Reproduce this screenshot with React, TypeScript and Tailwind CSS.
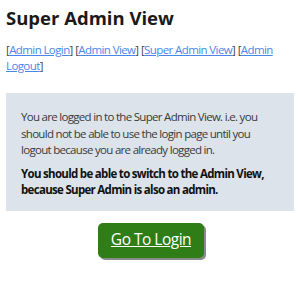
export default function App() {
  return (
    <div className="w-[300px] h-[300px] bg-white px-[6px] pt-[5px] font-['Open_Sans',sans-serif] text-[#333]">
      <h1 className="text-[18.5px] leading-[26px] font-bold text-[#1a1a1a]">Super Admin View</h1>
      <p className="mt-[11px] text-[11.5px] leading-[16px] tracking-[-0.6px] text-[#444]">
        [<a href="#" className="text-[#4a86e8] underline">Admin Login</a>]{" "}
        [<a href="#" className="text-[#4a86e8] underline">Admin View</a>]{" "}
        [<a href="#" className="text-[#4a86e8] underline">Super Admin View</a>]{" "}
        [<a href="#" className="text-[#4a86e8] underline">Admin Logout</a>]
      </p>
      <div className="mt-[19px] bg-[#dce3ea] px-[15px] pt-[16px] pb-[12px] text-[11.5px] leading-[16.5px] tracking-[-0.7px]">
        <p className="text-[#3a3a3a]">
          You are logged in to the Super Admin View. i.e. you should not be able to use the login page until you logout because you are already logged in.
        </p>
        <p className="mt-[7px] font-bold text-[#111]">
          You should be able to switch to the Admin View, because Super Admin is also an admin.
        </p>
      </div>
      <div className="flex justify-center mt-[12px]">
        <button className="w-[106px] h-[35px] rounded-[5px] bg-[#2e7d17] text-white text-[15.5px] tracking-[-0.5px] underline shadow-[2px_2px_0_#8a8a8a] ml-[2px]">
          Go To Login
        </button>
      </div>
    </div>
  );
}
